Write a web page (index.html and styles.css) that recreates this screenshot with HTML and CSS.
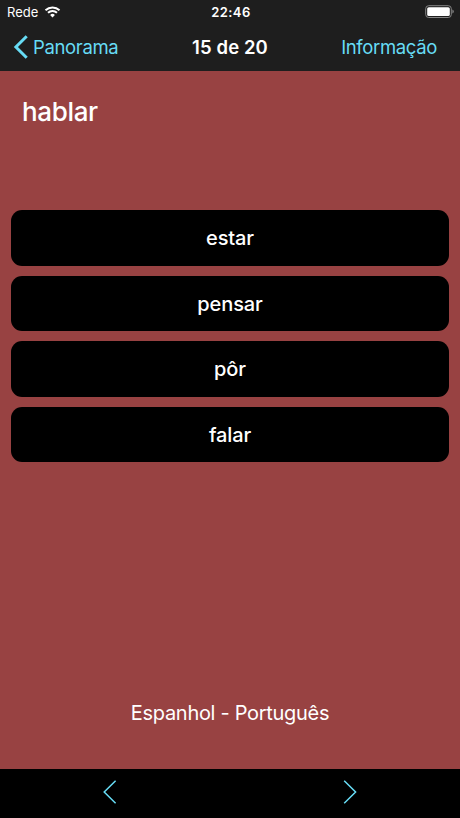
FILE: index.html
```html
<!DOCTYPE html>
<html lang="pt">
<head>
    <meta charset="UTF-8">
    <meta name="viewport" content="width=device-width, initial-scale=1">
    <title>15 de 20</title>
    <link rel="stylesheet" href="styles.css">
</head>
<body>

<header>
    <div class="status-bar">
        <div class="carrier">
            <span>Rede</span>
            <svg width="17" height="12" viewBox="0 0 16 12">
                <path d="M1 4.2a10.2 10.2 0 0 1 14 0M3.5 6.8a6.6 6.6 0 0 1 9 0" fill="none" stroke="#fff" stroke-width="2"/>
                <path d="M5.6 8.9a3.5 3.5 0 0 1 4.8 0L8 11.4z" fill="#fff"/>
            </svg>
        </div>
        <div class="time">22:46</div>
        <svg class="battery" width="29" height="14" viewBox="0 0 29 14">
            <rect x="0.7" y="0.7" width="25.6" height="11.8" rx="3" fill="none" stroke="#858585" stroke-width="1"/>
            <rect x="2.2" y="2.2" width="22.6" height="8.8" rx="1.6" fill="#fff"/>
            <path d="M27.4 4.6q1.4.6 1.4 2t-1.4 2z" fill="#858585"/>
        </svg>
    </div>
    <nav class="nav-bar">
        <a class="back">
            <svg width="15" height="24" viewBox="0 0 15 24">
                <path d="M13.7 1.2L2.9 12l10.8 10.8" fill="none" stroke="#67dcf5" stroke-width="3"/>
            </svg>
            <span>Panorama</span>
        </a>
        <h1>15 de 20</h1>
        <a class="info">Informação</a>
    </nav>
</header>

<main>
    <h2>hablar</h2>
    <div class="answers">
        <button>estar</button>
        <button>pensar</button>
        <button>pôr</button>
        <button>falar</button>
    </div>
    <p class="languages">Espanhol - Português</p>
</main>

<footer>
    <svg width="14" height="24" viewBox="0 0 14 24">
        <path d="M12.6 .8L1.2 12l11.4 11.2" fill="none" stroke="#67dcf5" stroke-width="1.5"/>
    </svg>
    <svg width="14" height="24" viewBox="0 0 14 24">
        <path d="M1.2 .8L12.6 12 1.2 23.2" fill="none" stroke="#67dcf5" stroke-width="1.5"/>
    </svg>
</footer>

</body>
</html>
```
FILE: styles.css
```css
* {
    box-sizing: border-box;
}

body {
    margin: 0;
    height: 818px;
    display: flex;
    flex-direction: column;
    background: #000;
    color: #fff;
    font-family: Inter, "Liberation Sans", sans-serif;
}

header {
    height: 71px;
    background: #1e1e1e;
}

.status-bar {
    display: grid;
    grid-template-columns: 1fr auto 1fr;
    align-items: center;
    height: 24px;
    padding: 0 5px 0 7px;
}

.carrier {
    display: flex;
    align-items: center;
    gap: 6px;
    font-size: 13px;
}

.time {
    font-size: 13px;
    font-weight: 600;
    letter-spacing: 0.4px;
}

.battery {
    justify-self: end;
    margin-right: 1px;
}

.nav-bar {
    display: grid;
    grid-template-columns: minmax(0, 1fr) auto minmax(0, 1fr);
    align-items: center;
    height: 47px;
    padding: 0 13px 2px;
    color: #67dcf5;
    font-size: 18.5px;
    letter-spacing: -0.35px;
}

.back {
    display: flex;
    align-items: center;
    gap: 5px;
}

.info {
    justify-self: end;
    padding-right: 10px;
}

h1 {
    margin: 0;
    color: #fff;
    font-size: 18.5px;
    font-weight: 600;
    letter-spacing: 0.1px;
}

main {
    flex: 1;
    display: flex;
    flex-direction: column;
    padding: 24px 11px 41px;
    background: #984242;
}

h2 {
    margin: 0 11px;
    height: 115px;
    font-size: 26px;
    line-height: 33px;
    font-weight: 500;
    letter-spacing: -0.35px;
}

.answers {
    display: grid;
    gap: 10px;
}

button {
    height: 55.5px;
    padding: 1px 0 0;
    border: 0;
    border-radius: 11px;
    background: #000;
    color: #fff;
    font: 500 20px Inter, "Liberation Sans", sans-serif;
    letter-spacing: -0.1px;
}

.languages {
    margin: auto 0 0;
    text-align: center;
    font-size: 20px;
    line-height: 30px;
    letter-spacing: -0.3px;
}

footer {
    display: flex;
    align-items: center;
    justify-content: space-between;
    height: 49px;
    padding: 0 103px 3px;
}
```
